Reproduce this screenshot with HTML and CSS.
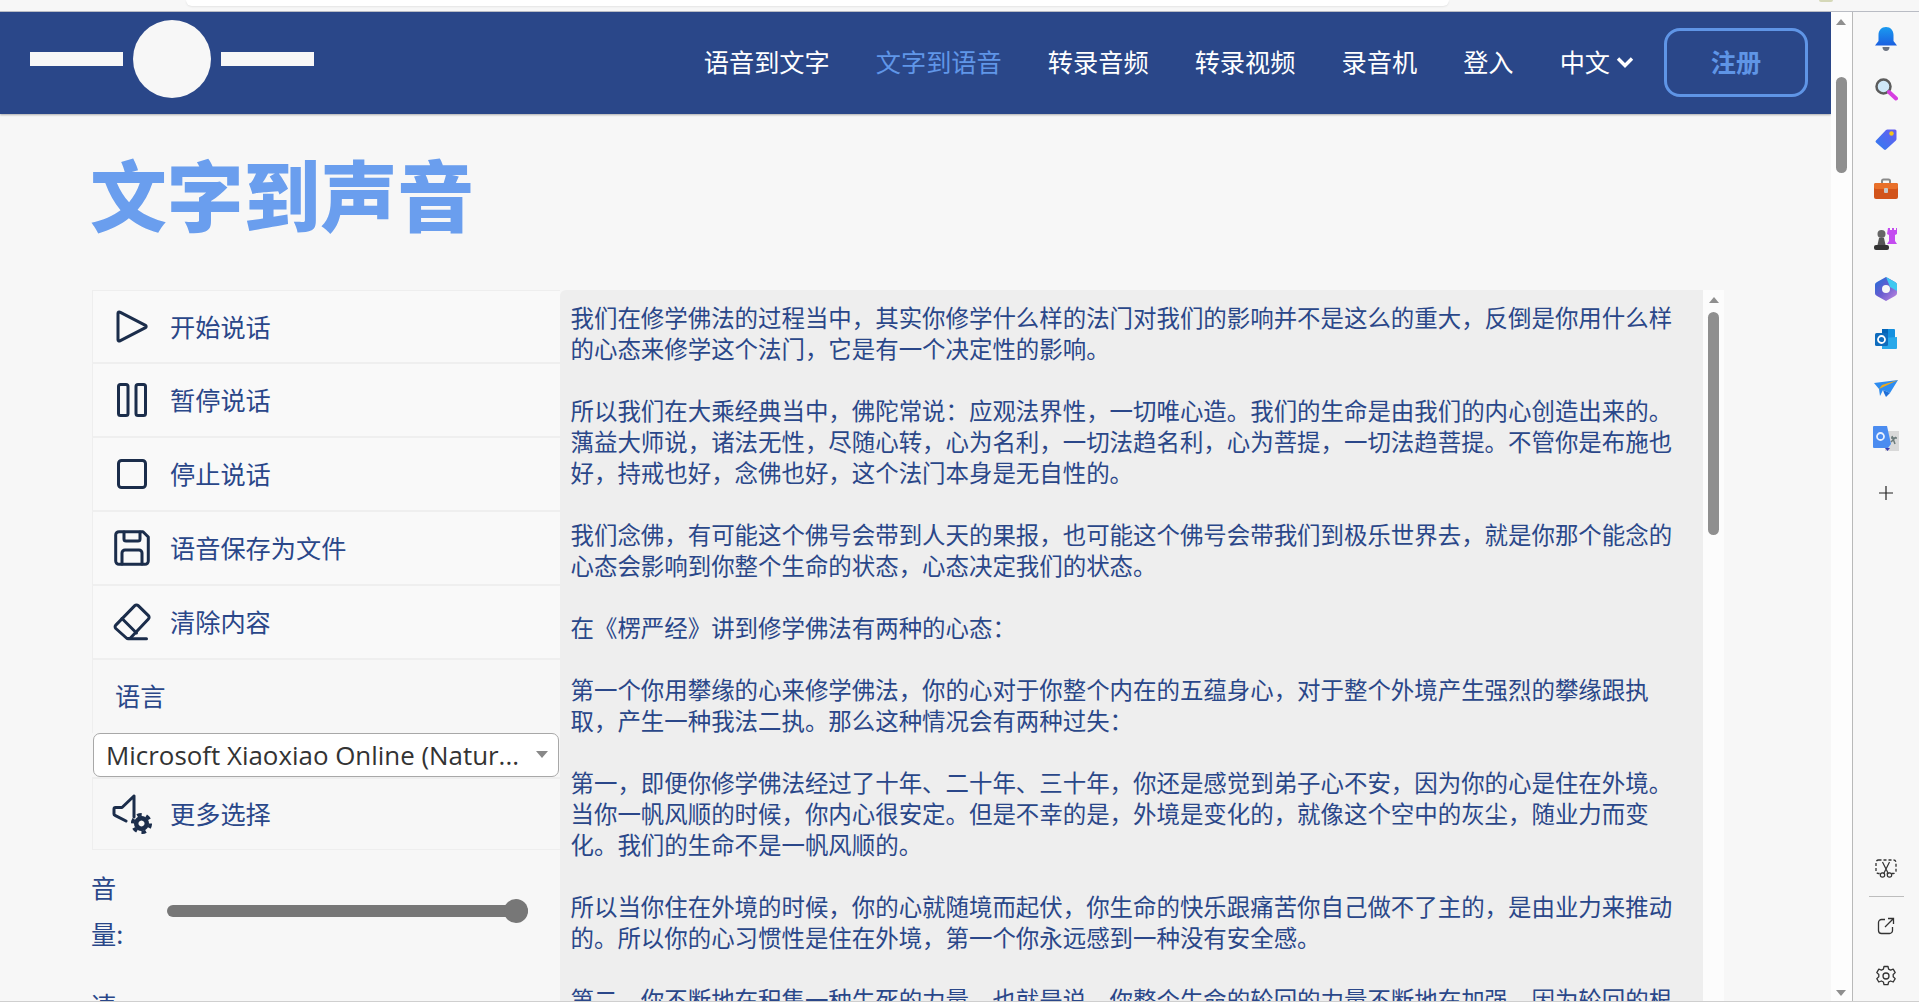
FILE: index.html
```html
<!DOCTYPE html>
<html lang="zh-CN">
<head>
<meta charset="utf-8">
<title>文字到声音</title>
<link rel="stylesheet" href="styles.css">
</head>
<body>
<div class="topstrip"><div class="addressbar"></div><div class="avatar"></div></div>
<div class="window">
  <div class="page">
    <nav class="nav">
      <a class="logo"><span class="logo-bar"></span><span class="logo-dot"></span><span class="logo-bar"></span></a>
      <div class="nav-links">
        <a class="nav-link">语音到文字</a>
        <a class="nav-link active">文字到语音</a>
        <a class="nav-link">转录音频</a>
        <a class="nav-link">转录视频</a>
        <a class="nav-link">录音机</a>
        <a class="nav-link">登入</a>
        <a class="nav-link lang">中文<svg class="chev" viewBox="0 0 18 12"><path d="M2 2.500 9 9.500 16 2.500" fill="none" stroke="currentColor" stroke-width="3.400"/></svg></a>
        <a class="signup"><span class="signup-text">注册</span></a>
      </div>
    </nav>
    <h1 class="title">文字到声音</h1>
    <div class="content">
      <aside class="side">
        <ul class="list">
          <li class="row">
            <span class="ico"><svg width="32" height="33" viewBox="0 0 32 33"><path d="M2 3.200c0-1 1-1.600 1.900-1.100L29.500 15.400c.9.500.9 1.700 0 2.200L3.900 30.900C3 31.400 2 30.800 2 29.800Z" class="ln"/></svg></span>
            <span class="row-text">开始说话</span>
          </li>
          <li class="row">
            <span class="ico"><svg width="30" height="34" viewBox="0 0 30 34"><rect x="1.500" y="1.500" width="9.500" height="31" rx="2" class="ln"/><rect x="19" y="1.500" width="9.500" height="31" rx="2" class="ln"/></svg></span>
            <span class="row-text">暂停说话</span>
          </li>
          <li class="row">
            <span class="ico"><svg width="30" height="30" viewBox="0 0 30 30"><rect x="1.500" y="1.500" width="27" height="27" rx="3" class="ln"/></svg></span>
            <span class="row-text">停止说话</span>
          </li>
          <li class="row">
            <span class="ico"><svg width="36" height="36" viewBox="0 0 36 36"><path d="M5 1.700h24l5.300 5.300V31a3.300 3.300 0 0 1-3.300 3.300H5A3.300 3.300 0 0 1 1.700 31V5A3.300 3.300 0 0 1 5 1.700Z" class="ln"/><path d="M10 2v7a2 2 0 0 0 2 2h12a2 2 0 0 0 2-2V2" class="ln"/><path d="M8 34v-11a3 3 0 0 1 3-3h14a3 3 0 0 1 3 3v11" class="ln"/></svg></span>
            <span class="row-text">语音保存为文件</span>
          </li>
          <li class="row">
            <span class="ico"><svg width="38" height="38" viewBox="0 0 38 38"><path d="M14 35.500 2.800 25.500a2.400 2.400 0 0 1 0-3.400L21.800 2.600a2.400 2.400 0 0 1 3.400 0l10.200 10a2.400 2.400 0 0 1 0 3.400L17 35.500Z" class="ln"/><path d="M9 15.500 23.500 30" class="ln"/><path d="M15 35.800h18.500" class="ln"/></svg></span>
            <span class="row-text">清除内容</span>
          </li>
          <li class="row label-row"><span class="row-text">语言</span></li>
        </ul>
        <div class="select"><span class="select-text">Microsoft Xiaoxiao Online (Natur...</span><span class="caret"></span></div>
        <div class="row more">
          <span class="ico"><svg width="40" height="40" viewBox="0 0 40 40"><path d="M22 2v21M22 2 10 13.500H3.500a1.500 1.500 0 0 0-1.500 1.500v5a1.500 1.500 0 0 0 1 1.400L14 27" class="ln"/><path d="M29.500 22a7.500 7.500 0 1 0 .01 0Zm0 4.500a3 3 0 1 1-.01 0Z" class="solid" fill-rule="evenodd"/><circle cx="29.500" cy="29.500" r="8.800" class="gear-teeth"/></svg></span>
          <span class="row-text">更多选择</span>
        </div>
        <div class="slider-row"><label class="slider-label">音量:</label><input class="range" type="range" min="0" max="100" value="100"></div>
        <div class="slider-row"><label class="slider-label">速度:</label><input class="range" type="range" min="0" max="100" value="50"></div>
      </aside>
      <div class="reader">
        <article class="text">
          <p>我们在修学佛法的过程当中，其实你修学什么样的法门对我们的影响并不是这么的重大，反倒是你用什么样的心态来修学这个法门，它是有一个决定性的影响。</p>
          <p>所以我们在大乘经典当中，佛陀常说：应观法界性，一切唯心造。我们的生命是由我们的内心创造出来的。蕅益大师说，诸法无性，尽随心转，心为名利，一切法趋名利，心为菩提，一切法趋菩提。不管你是布施也好，持戒也好，念佛也好，这个法门本身是无自性的。</p>
          <p>我们念佛，有可能这个佛号会带到人天的果报，也可能这个佛号会带我们到极乐世界去，就是你那个能念的心态会影响到你整个生命的状态，心态决定我们的状态。</p>
          <p>在《楞严经》讲到修学佛法有两种的心态：</p>
          <p>第一个你用攀缘的心来修学佛法，你的心对于你整个内在的五蕴身心，对于整个外境产生强烈的攀缘跟执取，产生一种我法二执。那么这种情况会有两种过失：</p>
          <p>第一，即便你修学佛法经过了十年、二十年、三十年，你还是感觉到弟子心不安，因为你的心是住在外境。当你一帆风顺的时候，你内心很安定。但是不幸的是，外境是变化的，就像这个空中的灰尘，随业力而变化。我们的生命不是一帆风顺的。</p>
          <p>所以当你住在外境的时候，你的心就随境而起伏，你生命的快乐跟痛苦你自己做不了主的，是由业力来推动的。所以你的心习惯性是住在外境，第一个你永远感到一种没有安全感。</p>
          <p>第二，你不断地在积集一种生死的力量，也就是说，你整个生命的轮回的力量不断地在加强。因为轮回的根本就是攀缘，你越攀缘，轮回的力量就越强大。</p>
        </article>
        <div class="scrollbar inner"><span class="arrow up"></span><span class="thumb inner-thumb"></span></div>
      </div>
    </div>
  </div>
  <div class="scrollbar outer"><span class="arrow up"></span><span class="thumb outer-thumb"></span><span class="spacer"></span><span class="arrow down"></span></div>
  <aside class="edge">
    <div class="edge-top">
      <span class="edge-ico"><svg width="24" height="26" viewBox="0 0 24 26"><defs><linearGradient id="gb" x1="0" y1="0" x2="0" y2="1"><stop offset="0" stop-color="#1a9bf0"/><stop offset="1" stop-color="#1b5fe0"/></linearGradient></defs><path d="M12 1c4.500 0 7.500 3.500 7.500 8v6l3.500 4.500H1L4.500 15V9C4.500 4.500 7.500 1 12 1Z" fill="url(#gb)"/><path d="M8.500 21h7c0 2.500-1.500 4-3.500 4s-3.500-1.500-3.500-4Z" fill="#6b7280"/></svg></span>
      <span class="edge-ico"><svg width="24" height="24" viewBox="0 0 24 24"><circle cx="9.500" cy="9.500" r="7" fill="#cfe8f8" stroke="#5c5c5c" stroke-width="2.500"/><path d="M15 15l7 6.500" stroke="#d63ee0" stroke-width="4" stroke-linecap="round"/></svg></span>
      <span class="edge-ico"><svg width="24" height="24" viewBox="0 0 24 24"><defs><linearGradient id="gt" x1="0" y1="1" x2="1" y2="0"><stop offset="0" stop-color="#2f7df0"/><stop offset="1" stop-color="#6a5cf0"/></linearGradient></defs><path d="M2 13.500 12 3a2 2 0 0 1 1.500-.6H21a1.500 1.500 0 0 1 1.500 1.500V12a2 2 0 0 1-.6 1.400L12 22.500a1.500 1.500 0 0 1-2 0L2 15.500a1.400 1.400 0 0 1 0-2Z" fill="url(#gt)"/><circle cx="17.500" cy="6.500" r="2.200" fill="#f5c518"/></svg></span>
      <span class="edge-ico"><svg width="24" height="22" viewBox="0 0 24 22"><path d="M8 6V3a1.500 1.500 0 0 1 1.500-1.500h5A1.500 1.500 0 0 1 16 3v3" fill="none" stroke="#8a8a8a" stroke-width="2"/><rect y="5" width="24" height="16" rx="2" fill="#d2541b"/><rect y="5" width="24" height="6" rx="2" fill="#e9702a"/><rect x="10" y="10" width="4" height="5" rx="1" fill="#c9c9c9"/></svg></span>
      <span class="edge-ico"><svg width="24" height="24" viewBox="0 0 24 24"><path d="M15 1h2v2h2V1h2v2h2V1h1v6l-2 1v6l2 3H14l2-3V8l-2-1Z" fill="#c44cf0" transform="translate(-1 0)"/><circle cx="7.500" cy="7" r="4" fill="#666"/><path d="M5 11h5l1.500 7h-8Z" fill="#555"/><rect y="18" width="15" height="5" rx="2" fill="#333"/></svg></span>
      <span class="edge-ico"><svg width="22" height="24" viewBox="0 0 22 24"><defs><linearGradient id="gm" x1="0" y1="0" x2="1" y2="1"><stop offset="0" stop-color="#1d6fd8"/><stop offset=".5" stop-color="#6a5cd0"/><stop offset="1" stop-color="#c48ae0"/></linearGradient></defs><path d="M11 0l9 5c1.500.8 2 1.800 2 3v8c0 1.200-.5 2.200-2 3l-9 5-9-5c-1.500-.8-2-1.800-2-3V8c0-1.200.5-2.200 2-3Z" fill="url(#gm)"/><path d="M11 0l9 5c1.500.8 2 1.800 2 3v6l-7-4Z" fill="#3ec8f0"/><circle cx="11" cy="12" r="4" fill="#f7f7f7"/></svg></span>
      <span class="edge-ico"><svg width="22" height="22" viewBox="0 0 22 22"><path d="M7 1h12a1 1 0 0 1 1 1v8H7Z" fill="#1490df"/><path d="M7 10 22 9v11a1 1 0 0 1-1 1H7Z" fill="#28a8ea"/><path d="M7 1h6v9H7Z" fill="#0364b8"/><rect y="5" width="13" height="13" rx="1.500" fill="#0f6cbd"/><circle cx="6.500" cy="11.500" r="3.500" fill="none" stroke="#fff" stroke-width="1.800"/></svg></span>
      <span class="edge-ico"><svg width="24" height="18" viewBox="0 0 24 18"><path d="M0 3 24 0 16 13 9 10 6 16 5 9Z" fill="#2e8cf0"/><path d="M5 9 24 0 8 5Z" fill="#f0a818"/><path d="M9 10 16 13 12 17 10 13Z" fill="#1e6fd8"/></svg></span>
      <span class="edge-ico"><svg width="26" height="26" viewBox="0 0 26 26"><rect x="12" y="5" width="14" height="20" fill="#d9d9d9"/><path d="M1 0h13l4 18-3 4H1a1 1 0 0 1-1-1V1a1 1 0 0 1 1-1Z" fill="#4b8cf0"/><circle cx="7.500" cy="10.500" r="3.500" fill="none" stroke="#e8f0ff" stroke-width="1.800"/><path d="M12 22h5l-2.500 3Z" fill="#3b3bb0"/><path d="M19 10l3 8M23 11l-5 5M18 12h6" stroke="#6a7a7a" stroke-width="1.500" fill="none"/></svg></span>
      <span class="edge-ico edge-plus"><svg width="16" height="16" viewBox="0 0 16 16"><path d="M8 1v14M1 8h14" stroke="#222" stroke-width="1.200"/></svg></span>
    </div>
    <div class="edge-bottom">
      <span class="edge-ico edge-cut"><svg width="22" height="20" viewBox="0 0 22 20"><rect x="1" y="1" width="20" height="13.500" rx="2.500" fill="none" stroke="#333" stroke-width="1.300" stroke-dasharray="3 2"/><path d="M7.500 3l5.500 11M14.500 3 9 14" stroke="#333" stroke-width="1.200"/><circle cx="7.500" cy="16" r="2.200" fill="#f7f7f7" stroke="#333" stroke-width="1.200"/><circle cx="14.500" cy="16" r="2.200" fill="#f7f7f7" stroke="#333" stroke-width="1.200"/></svg></span>
      <span class="edge-rule"></span>
      <span class="edge-ico"><svg width="18" height="18" viewBox="0 0 18 18"><path d="M8 2.500H4.500a3 3 0 0 0-3 3v8a3 3 0 0 0 3 3h8a3 3 0 0 0 3-3V10M8 10 16.500 1.500M11 1.500h5.500V7" fill="none" stroke="#333" stroke-width="1.300"/></svg></span>
      <span class="edge-ico"><svg width="22" height="22" viewBox="0 0 22 22"><path d="M9 1.500h4l.6 2.700 2 1 2.600-1 2 3.400-2 1.900v2.200l2 1.900-2 3.400-2.600-1-2 1-.6 2.700H9l-.6-2.700-2-1-2.600 1-2-3.400 2-1.900V9.500l-2-1.900 2-3.400 2.600 1 2-1Z" fill="none" stroke="#333" stroke-width="1.300" stroke-linejoin="round"/><circle cx="11" cy="11" r="3" fill="none" stroke="#333" stroke-width="1.300"/></svg></span>
    </div>
  </aside>
</div>
</body>
</html>
```

FILE: styles.css
```css
* { box-sizing: border-box; }
html, body { margin: 0; height: 100%; overflow: hidden; }
body {
  display: flex;
  flex-direction: column;
  height: 1002px;
  background: #f7f7f7;
  font-family: "Noto Sans CJK SC", "Noto Sans", sans-serif;
  color: #2a4789;
  border-bottom: 1px solid #cfcfcf;
}
.topstrip {
  flex: none;
  height: 12px;
  display: flex;
  justify-content: space-between;
  padding-left: 186px;
  padding-right: 86px;
  border-bottom: 1px solid #b9bcc4;
}
.addressbar {
  width: 1263px;
  height: 6px;
  background: #fff;
  border-radius: 0 0 14px 14px;
  box-shadow: 0 1px 2px rgba(0,0,0,.08);
}
.avatar { width: 14px; height: 2px; background: #d5d8b8; border-radius: 0 0 7px 7px; }
.window { flex: 1; display: flex; min-height: 0; }
.page { flex: 1; min-width: 0; overflow: hidden; }

.nav {
  height: 102px;
  background: #2a4789;
  box-shadow: 0 1px 2px rgba(0,0,0,.3);
  display: flex;
  align-items: center;
  justify-content: space-between;
  padding: 0 23px 0 30px;
}
.logo { display: flex; align-items: center; gap: 10px; margin-bottom: 8px; }
.logo-bar { width: 93px; height: 14px; background: #f7f7f7; }
.logo-dot { width: 78px; height: 78px; border-radius: 50%; background: #f7f7f7; }
.nav-links { display: flex; align-items: center; margin-bottom: 2px; }
.nav-link { font-size: 25.200px; line-height: 36px; padding-bottom: 2px; color: #fff; margin-right: 46.100px; white-space: nowrap; }
.nav-link.active { color: #6096e8; }
.nav-link.lang { display: flex; align-items: center; gap: 6px; margin-right: 30px; }
.chev { width: 18px; height: 12px; margin-top: 2px; }
.signup {
  width: 144px;
  height: 69px;
  border: 3px solid #5f95e6;
  border-radius: 16px;
  color: #5f95e6;
  font-size: 25.200px;
  font-weight: 700;
  display: flex;
  align-items: center;
  justify-content: center;
}
.signup-text { margin-bottom: 3px; }

.title {
  margin: 0;
  padding: 29px 0 0 90px;
  height: 176px;
  font-size: 76.800px;
  line-height: 100px;
  font-weight: 900;
  color: #6a9eee;
}

.content { display: flex; align-items: flex-start; padding-left: 92px; }
.side { flex: none; width: 468px; font-size: 25.200px; }
.list { list-style: none; margin: 0; padding: 0; }
.row {
  display: flex;
  align-items: center;
  height: 74px;
  background: #f9f9f9;
  border-left: 1px solid #eee;
  border-bottom: 2px solid #efefef;
}
.row-text { margin-bottom: 1px; }
.list .row:first-child { height: 73.500px; border-top: 1px solid #eee; }
.list .row:last-child { border-bottom: 0; height: 73px; background: #f7f7f7; }
.ico { flex: none; width: 77px; display: flex; justify-content: center; align-items: center; }
.ln { fill: none; stroke: #1b2d4b; stroke-width: 3; stroke-linejoin: round; stroke-linecap: round; }
.solid { fill: #1b2d4b; stroke: none; }
.gear-teeth { fill: none; stroke: #1b2d4b; stroke-width: 3.500; stroke-dasharray: 4.600 4.600; }
.label-row { padding-left: 22px; }
.label-row .row-text { margin-bottom: 3px; }
.select {
  height: 44px;
  margin-left: 1px;
  width: 466px;
  background: #fff;
  border: 1px solid #a8a8a8;
  border-radius: 7px;
  display: flex;
  align-items: center;
  justify-content: space-between;
  padding: 0 10px 0 12px;
}
.select-text { font-family: "Open Sans", "Noto Sans", sans-serif; color: #333; font-size: 25.900px; white-space: nowrap; }
.caret { width: 0; height: 0; border-left: 6px solid transparent; border-right: 6px solid transparent; border-top: 7px solid #888; }
.more { height: 73px; background: #f7f7f7; border-top: 2px solid #eee; border-bottom: 1px solid #eee; }
.slider-row { display: flex; align-items: center; margin-top: 16px; margin-bottom: 26px; height: 91px; }
.slider-label { flex: none; width: 50px; margin-left: -1px; margin-right: 26px; margin-bottom: 3px; line-height: 46px; }
.range {
  -webkit-appearance: none;
  appearance: none;
  width: 361px;
  height: 24px;
  margin: 0;
  background: transparent;
}
.range::-webkit-slider-runnable-track { height: 12px; background: #777; border-radius: 6px; }
.range::-webkit-slider-thumb {
  -webkit-appearance: none;
  width: 24px;
  height: 24px;
  margin-top: -6px;
  border-radius: 50%;
  background: #777;
}

.reader { flex: none; width: 1164px; display: flex; align-items: stretch; }
.text {
  flex: 1;
  min-width: 0;
  height: 1000px;
  background: #eee;
  border-radius: 6px 0 0 0;
  padding: 12px 11px 0 10.500px;
  font-size: 23.450px;
  line-height: 31px;
}
.text p { margin: 0 0 31px; }

.scrollbar { flex: none; width: 21px; background: #fdfdfd; display: flex; flex-direction: column; align-items: center; }
.scrollbar.outer { height: 990px; border-right: 1px solid #b9b9b9; width: 22px; padding-right: 1px; }
.scrollbar.inner { height: 1000px; background: #fcfcfc; }
.arrow { flex: none; width: 0; height: 0; border-left: 5.500px solid transparent; border-right: 5.500px solid transparent; }
.arrow.up { border-bottom: 6px solid #8f8f8f; margin-top: 7px; }
.arrow.down { border-top: 6px solid #8f8f8f; margin-bottom: 6px; }
.thumb { flex: none; width: 11px; background: #8f8f8f; border-radius: 6px; }
.outer-thumb { height: 96px; margin-top: 52px; }
.inner-thumb { height: 223px; margin-top: 9px; }
.spacer { flex: 1; }

.edge { flex: none; width: 66px; height: 990px; display: flex; flex-direction: column; justify-content: space-between; align-items: center; }
.edge-top { display: flex; flex-direction: column; align-items: center; padding-top: 2px; }
.edge-top .edge-ico { height: 50px; }
.edge-top .edge-plus { margin-top: 4px; }
.edge-bottom { display: flex; flex-direction: column; align-items: center; padding-bottom: 1px; }
.edge-ico { display: flex; align-items: center; justify-content: center; height: 50px; width: 40px; }
.edge-cut { margin-bottom: -2px; }
.edge-rule { width: 35px; height: 1px; background: #bdbdbd; margin: 4px 0; }
```
